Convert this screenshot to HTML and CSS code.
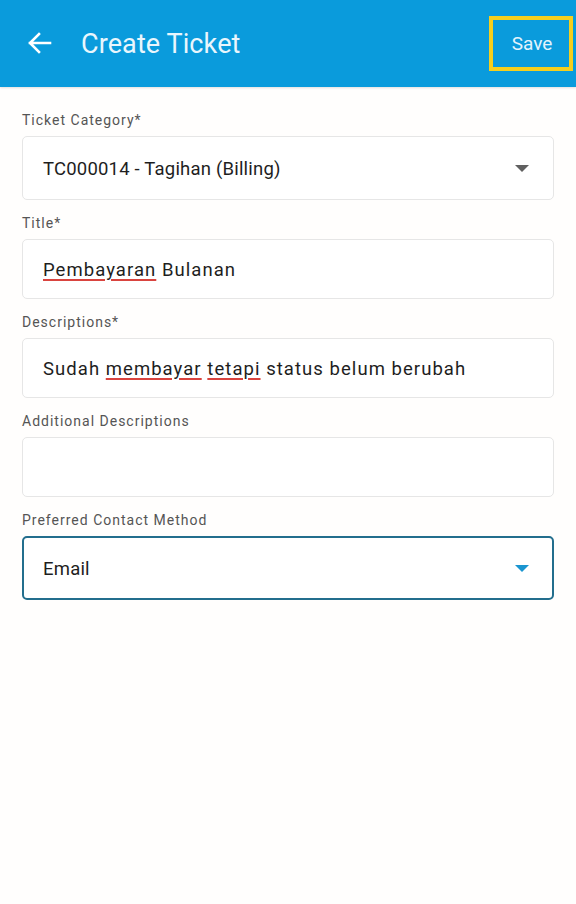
FILE: index.html
```html
<!DOCTYPE html>
<html lang="id">
<head>
<meta charset="utf-8">
<title>Create Ticket</title>
<link rel="stylesheet" href="styles.css">
</head>
<body>
<header class="appbar">
  <div class="appbar-left">
    <svg class="back" width="26" height="24" viewBox="0 0 26 24" aria-hidden="true">
      <path d="M24 12H4M13 3L4 12l9 9" fill="none" stroke="#fff" stroke-width="2.6" stroke-linecap="square"/>
    </svg>
    <h1 class="title">Create Ticket</h1>
  </div>
  <div class="save">Save</div>
</header>
<main class="form">
  <div class="field">
    <div class="label">Ticket Category*</div>
    <div class="box select">
      <span class="value">TC000014 - Tagihan (Billing)</span>
      <span class="caret"></span>
    </div>
  </div>
  <div class="field">
    <div class="label">Title*</div>
    <div class="box">
      <span class="value spaced"><span class="spell">Pembayaran</span> Bulanan</span>
    </div>
  </div>
  <div class="field">
    <div class="label">Descriptions*</div>
    <div class="box">
      <span class="value spaced">Sudah <span class="spell">membayar</span> <span class="spell">tetapi</span> status belum berubah</span>
    </div>
  </div>
  <div class="field">
    <div class="label">Additional Descriptions</div>
    <div class="box"></div>
  </div>
  <div class="field">
    <div class="label">Preferred Contact Method</div>
    <div class="box select focused">
      <span class="value">Email</span>
      <span class="caret blue"></span>
    </div>
  </div>
</main>
</body>
</html>
```
FILE: styles.css
```css
* { box-sizing: border-box; }
html, body { margin: 0; padding: 0; }
body {
  width: 576px;
  height: 904px;
  background: #fffefd;
  font-family: Roboto, "Noto Sans", "Liberation Sans", sans-serif;
  color: #222;
  overflow: hidden;
}
.appbar {
  height: 87px;
  background: #0a9bdc;
  display: flex;
  align-items: center;
  justify-content: space-between;
  padding: 0 3px 0 26px;
  box-shadow: 0 1px 2px rgba(0,0,0,0.12);
}
.appbar-left { display: flex; align-items: center; }
.back { display: block; margin-top: -2px; }
.title {
  margin: 0 0 0 29px;
  font-size: 27px;
  font-weight: 400;
  color: #e9f6fd;
  letter-spacing: 0.1px;
}
.save {
  width: 84px;
  height: 55px;
  border: 4px solid #f5cf1d;
  display: flex;
  align-items: center;
  justify-content: center;
  color: #e3f4fc;
  font-size: 19px;
  padding-left: 2px;
}
.form {
  padding: 25px 22px 0 22px;
  display: flex;
  flex-direction: column;
  gap: 15px;
}
.field { display: flex; flex-direction: column; }
.label {
  font-size: 14px;
  letter-spacing: 1px;
  color: #555;
  line-height: 16px;
  margin-bottom: 8px;
}
.box {
  height: 60px;
  border: 1px solid #e6e6e6;
  border-radius: 5px;
  background: #fff;
  display: flex;
  align-items: center;
  justify-content: space-between;
  padding: 2px 24px 0 20px;
}
.box.select { height: 64px; }
.box.focused {
  border: 2px solid #236e8d;
  padding-left: 19px;
  padding-right: 23px;
}
.value {
  font-size: 18.5px;
  color: #1e1e1e;
  letter-spacing: 0.2px;
}
.value.spaced { letter-spacing: 1.05px; }
.spell {
  text-decoration: underline solid #d9443f;
  text-decoration-thickness: 2px;
  text-underline-offset: 3px;
}
.caret {
  width: 0;
  height: 0;
  border-left: 7px solid transparent;
  border-right: 7px solid transparent;
  border-top: 7px solid #606060;
  margin-top: -1px;
}
.caret.blue { border-top-color: #1a95d0; }
```
